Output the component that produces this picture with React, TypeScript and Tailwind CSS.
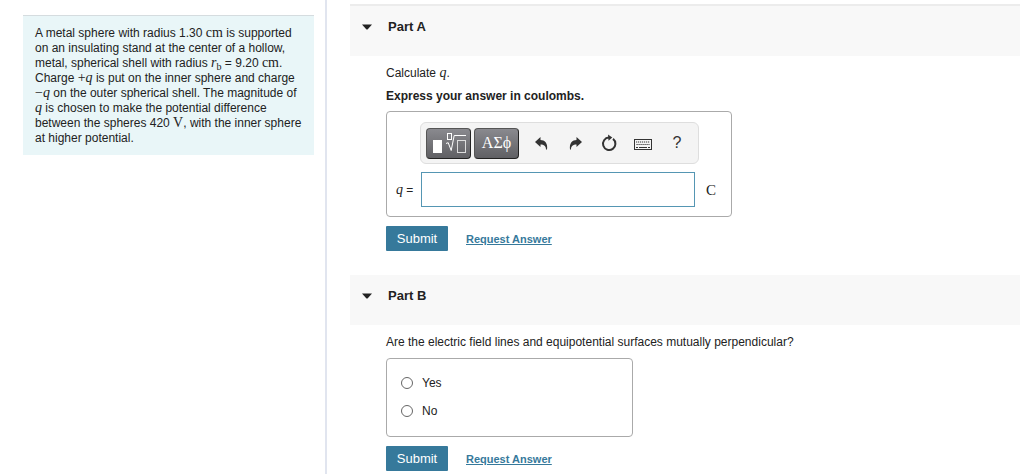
import { type ReactNode } from "react";

function MathText({ children, italic = false }: { children: ReactNode; italic?: boolean }) {
  return (
    <span
      className={
        italic
          ? "font-['Liberation_Serif',serif] text-[14px] leading-none italic"
          : "font-['Liberation_Serif',serif] text-[14px] leading-none"
      }
    >
      {children}
    </span>
  );
}

function PartHeader({ title, first = false }: { title: string; first?: boolean }) {
  return (
    <header
      className={
        first
          ? "h-[52px] border-t-2 border-[#ececec] bg-[#f8f8f8] pt-3"
          : "h-[50px] bg-[#f8f8f8] pt-3"
      }
    >
      <h2>
        <button type="button" aria-expanded="true" className="flex items-center gap-4 pl-3 text-[13px] leading-[18px] font-bold text-[#222]">
          <svg width="10" height="6" viewBox="0 0 10 6" aria-hidden="true">
            <path d="M0 .5h10L6 5Q5 6 4 5Z" fill="#222" />
          </svg>
          {title}
        </button>
      </h2>
    </header>
  );
}

function Actions() {
  return (
    <div className="mt-[9px] flex items-center gap-[18px]">
      <button type="submit" className="h-[25px] w-[62px] rounded-[1px] bg-[#36799b] text-[13px] text-white">
        Submit
      </button>
      <a href="#request-answer" className="text-[11px] leading-[14px] font-bold text-[#36799b] underline">
        Request Answer
      </a>
    </div>
  );
}

const darkKey =
  "flex h-[31px] w-[45px] items-center justify-center rounded-[4px] border border-[#555] border-r-[#222] border-b-[#222] bg-linear-to-b from-[#8a8a8f] to-[#606064] text-white";

const iconKey = "flex h-[30px] w-[34px] items-center justify-center text-[#333]";

function Toolbar() {
  return (
    <div role="toolbar" aria-label="Equation tools" className="flex h-[42px] w-[279px] items-center rounded-md border border-[#dedede] bg-[#f4f4f4] pl-[5px]">
      <button type="button" aria-label="Templates" className={darkKey}>
        <svg width="35" height="22" viewBox="0 0 35 22" fill="none" stroke="#fff" aria-hidden="true">
          <rect x="2" y="8" width="9" height="13" fill="#fff" stroke="none" />
          <rect x="16.5" y="1.5" width="4" height="6" />
          <path d="M15 11.5l2.2-.8 3 7.8 3-15H35" />
          <rect x="26.5" y="8.5" width="8" height="12" stroke="#ddd" />
        </svg>
      </button>
      <button type="button" aria-label="Greek symbols" className={darkKey + " ml-[3px] font-['Liberation_Serif',serif] text-[16px]"}>
        ΑΣϕ
      </button>
      <div className="ml-[5px] flex">
        <button type="button" aria-label="Undo" className={iconKey}>
          <svg width="13" height="13" viewBox="0 0 13 13" aria-hidden="true">
            <path d="M0 5 5.5 0V3C9.5 3 13 6 12 12.5H11C11 9 9 7.5 5.5 7.5V10Z" fill="#333" />
          </svg>
        </button>
        <button type="button" aria-label="Redo" className={iconKey}>
          <svg width="13" height="13" viewBox="0 0 13 13" aria-hidden="true">
            <path d="M13 5 7.5 0V3C3.5 3 0 6 1 12.5H2C2 9 4 7.5 7.5 7.5V10Z" fill="#333" />
          </svg>
        </button>
        <button type="button" aria-label="Reset" className={iconKey}>
          <svg width="16" height="18" viewBox="0 0 16 18" fill="none" aria-hidden="true">
            <path d="M12 4.9A6.2 6.2 0 1 1 8 3.6" stroke="#333" strokeWidth="2" />
            <path d="M7 .5 11.3 3.5 7.5 6.8Z" fill="#333" />
          </svg>
        </button>
        <button type="button" aria-label="Keyboard" className={iconKey + " pt-1"}>
          <svg width="18" height="12" viewBox="0 0 18 12" fill="none" stroke="#333" aria-hidden="true">
            <rect x=".5" y=".5" width="17" height="10" />
            <path d="M2 3h14M2.5 5.5h13" strokeDasharray="1.2 .8" />
            <path d="M2 8.5h2M5 8.5h8M14 8.5h2" />
          </svg>
        </button>
        <button type="button" aria-label="Help" className={iconKey + " text-[16px]"}>
          ?
        </button>
      </div>
    </div>
  );
}

export default function App() {
  return (
    <div className="flex min-h-screen bg-white font-['Liberation_Sans',Arial,sans-serif] text-[12px] leading-[14px] text-[#222]">
      <aside className="w-[327px] shrink-0 border-r-2 border-[#e1e5ef] pt-[15px] pr-[11px] pl-[23px]">
        <p className="border-t border-[#d5dcdf] bg-[#e9f6f8] pt-[10px] pr-3 pb-[9px] pl-3 leading-[15px]">
          A metal sphere with radius 1.30 <MathText>cm</MathText> is supported on an insulating stand at the center of a
          hollow, metal, spherical shell with radius <MathText italic>r</MathText>
          <sub className="font-['Liberation_Serif',serif] text-[10px] leading-none">b</sub> = 9.20{" "}
          <MathText>cm</MathText>. Charge{" "}
          <MathText>
            +<i>q</i>
          </MathText>{" "}
          is put on the inner sphere and charge{" "}
          <MathText>
            −<i>q</i>
          </MathText>{" "}
          on the outer spherical shell. The magnitude of <MathText italic>q</MathText> is chosen to make the potential
          difference between the spheres 420 <MathText>V</MathText>, with the inner sphere at higher potential.
        </p>
      </aside>

      <main className="min-w-0 flex-1 pt-1 pr-1 pl-[23px]">
        <section>
          <PartHeader title="Part A" first />
          <form className="pt-[10px] pb-6 pl-9" onSubmit={(e) => e.preventDefault()}>
            <p>
              Calculate <MathText italic>q</MathText>.
            </p>
            <p className="mt-[9px] font-bold">Express your answer in coulombs.</p>
            <div className="mt-2 w-[346px] rounded-[4px] border border-[#aaa] pt-[10px] pr-2 pb-[9px] pl-[9px]">
              <div className="pl-6">
                <Toolbar />
              </div>
              <div className="mt-2 flex items-center">
                <label htmlFor="charge" className="w-[25px]">
                  <MathText italic>q</MathText> =
                </label>
                <input id="charge" type="text" className="h-[35px] w-[274px] border border-[#5596b3] bg-white px-2 text-[14px] outline-none" />
                <span className="ml-[11px] font-['Liberation_Serif',serif] text-[15px]">C</span>
              </div>
            </div>
            <Actions />
          </form>
        </section>

        <section>
          <PartHeader title="Part B" />
          <form className="pt-[10px] pl-9" onSubmit={(e) => e.preventDefault()}>
            <fieldset>
              <legend>Are the electric field lines and equipotential surfaces mutually perpendicular?</legend>
              <div className="mt-[9px] flex w-[247px] flex-col gap-[14px] rounded-[4px] border border-[#aaa] pt-[17px] pb-[18px] pl-[14px]">
                {["Yes", "No"].map((option) => (
                  <label key={option} className="flex items-center gap-[9px]">
                    <input type="radio" name="perpendicular" value={option} className="size-3 appearance-none rounded-full border border-[#666] bg-white checked:border-4 checked:border-[#36799b]" />
                    {option}
                  </label>
                ))}
              </div>
            </fieldset>
            <Actions />
          </form>
        </section>
      </main>
    </div>
  );
}
